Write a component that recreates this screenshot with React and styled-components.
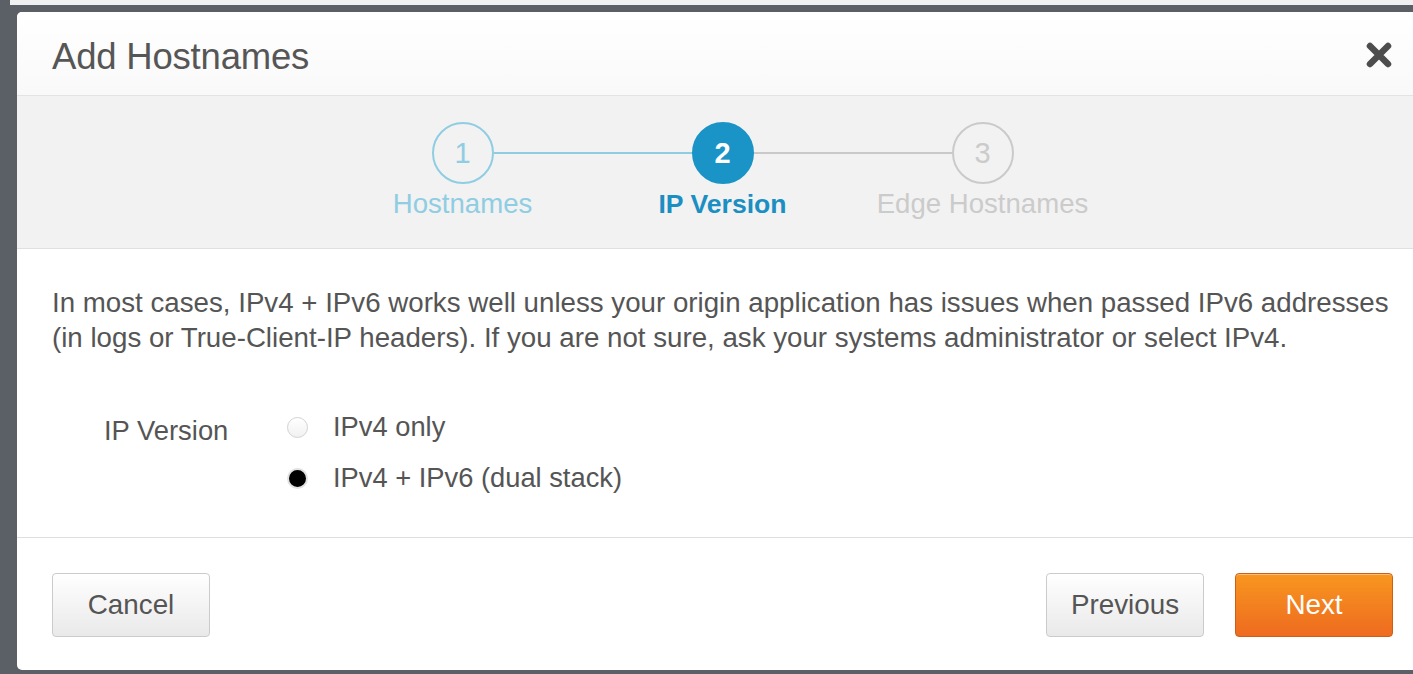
import React from 'react';
import styled, { createGlobalStyle } from 'styled-components';

const GlobalStyle = createGlobalStyle`
    html, body {
        margin: 0;
        padding: 0;
        background: #5b6067;
    }

    body {
        font-family: "Liberation Sans", Arial, Helvetica, sans-serif;
        overflow: hidden;
    }
`;

const steps = [
    { number: 1, label: 'Hostnames', state: 'done' },
    { number: 2, label: 'IP Version', state: 'active' },
    { number: 3, label: 'Edge Hostnames', state: 'todo' },
];

const stepColors = {
    done: { ring: '#8fcde2', text: '#8fcde2', fill: '#f2f2f2' },
    active: { ring: '#1a94c6', text: '#1b8fc2', fill: '#1a94c6' },
    todo: { ring: '#cacaca', text: '#cbcbcb', fill: '#f2f2f2' },
};

const CloseIcon = () => (
    <svg width="28" height="28" viewBox="0 0 28 28">
        <path
            d="M5 5 L23 23 M23 5 L5 23"
            stroke="#4d4d4d"
            strokeWidth="6.5"
            strokeLinecap="round"
            fill="none"
        />
    </svg>
);

const Stepper = () => (
    <StepBand>
        {steps.map((step, i) => (
            <Step key={step.number}>
                <StepTrack>
                    <Connector
                        $hidden={i === 0}
                        $color={steps[i - 1] && steps[i - 1].state === 'done' ? '#8fcde2' : '#c9c9c9'}
                    />
                    <StepCircle $state={step.state}>{step.number}</StepCircle>
                    <Connector
                        $hidden={i === steps.length - 1}
                        $color={step.state === 'done' ? '#8fcde2' : '#c9c9c9'}
                    />
                </StepTrack>
                <StepLabel $state={step.state}>{step.label}</StepLabel>
            </Step>
        ))}
    </StepBand>
);

export default function App() {
    return (
        <>
            <GlobalStyle />
            <Screen>
                <PageEdge />
                <Modal>
                    <Header>
                        <Title>Add Hostnames</Title>
                        <CloseButton aria-label="Close">
                            <CloseIcon />
                        </CloseButton>
                    </Header>

                    <Stepper />

                    <Body>
                        <Intro>
                            In most cases, IPv4 + IPv6 works well unless your origin application has issues when passed IPv6 addresses
                            (in logs or True-Client-IP headers). If you are not sure, ask your systems administrator or select IPv4.
                        </Intro>

                        <FieldRow>
                            <FieldLabel>IP Version</FieldLabel>
                            <Options>
                                <Option>
                                    <Radio />
                                    IPv4 only
                                </Option>
                                <Option>
                                    <Radio $checked />
                                    IPv4 + IPv6 (dual stack)
                                </Option>
                            </Options>
                        </FieldRow>
                    </Body>

                    <Footer>
                        <Button>Cancel</Button>
                        <Actions>
                            <Button>Previous</Button>
                            <Button $primary>Next</Button>
                        </Actions>
                    </Footer>
                </Modal>
            </Screen>
        </>
    );
}

const Screen = styled.div`
    min-height: 674px;
    background: #5b6067;
    padding: 0 0 0 17px;
    overflow: hidden;
`;

const PageEdge = styled.div`
    height: 5px;
    margin-left: -7px;
    background: #eef0f1;
    margin-bottom: 7px;
`;

const Modal = styled.section`
    width: 1411px;
    background: #ffffff;
    border-radius: 5px;
    overflow: hidden;
    color: #555555;
`;

const Header = styled.header`
    height: 84px;
    box-sizing: border-box;
    padding: 7px 20px 0 35px;
    display: flex;
    align-items: center;
    justify-content: space-between;
    background: linear-gradient(#ffffff, #f9f9f9);
    border-bottom: 1px solid #e3e3e3;
`;

const Title = styled.h2`
    margin: 0;
    font-size: 36.5px;
    font-weight: normal;
    color: #565656;
    letter-spacing: -0.2px;
`;

const CloseButton = styled.button`
    border: none;
    background: none;
    padding: 0;
    display: flex;
    cursor: pointer;
    margin-right: 15px;
    margin-top: -5px;
`;

const StepBand = styled.div`
    height: 153px;
    box-sizing: border-box;
    padding-top: 26px;
    background: #f2f2f2;
    border-bottom: 1px solid #e0e0e0;
    display: flex;
    justify-content: center;
`;

const Step = styled.div`
    width: 260px;
    display: flex;
    flex-direction: column;
    align-items: center;
`;

const StepTrack = styled.div`
    width: 100%;
    display: flex;
    align-items: center;
`;

const Connector = styled.span`
    flex: 1;
    height: 2px;
    background: ${p => (p.$hidden ? 'transparent' : p.$color)};
`;

const StepCircle = styled.span`
    width: 62px;
    height: 62px;
    box-sizing: border-box;
    border-radius: 50%;
    border: 2px solid ${p => stepColors[p.$state].ring};
    background: ${p => stepColors[p.$state].fill};
    color: ${p => (p.$state === 'active' ? '#ffffff' : stepColors[p.$state].text)};
    font-size: 29px;
    font-weight: ${p => (p.$state === 'active' ? 'bold' : 'normal')};
    display: flex;
    align-items: center;
    justify-content: center;
`;

const StepLabel = styled.span`
    margin-top: 4px;
    font-size: ${p => (p.$state === 'active' ? '26.6px' : '27.6px')};
    line-height: 32px;
    white-space: nowrap;
    color: ${p => stepColors[p.$state].text};
    font-weight: ${p => (p.$state === 'active' ? 'bold' : 'normal')};
`;

const Body = styled.div`
    padding: 36px 35px 42px;
    border-bottom: 1px solid #dedede;
`;

const Intro = styled.p`
    margin: 0;
    font-size: 27.7px;
    line-height: 35px;
    color: #555555;
    max-width: 1345px;
`;

const FieldRow = styled.div`
    margin-top: 54px;
    display: flex;
    align-items: flex-start;
    padding-left: 52px;
`;

const FieldLabel = styled.label`
    width: 183px;
    font-size: 27.4px;
    line-height: 35px;
    padding-top: 4px;
    color: #555555;
`;

const Options = styled.div`
    display: flex;
    flex-direction: column;
    gap: 16px;
`;

const Option = styled.label`
    display: flex;
    align-items: center;
    gap: 25px;
    font-size: 27.3px;
    line-height: 35px;
    color: #555555;
`;

const Radio = styled.span`
    width: 21px;
    height: 21px;
    box-sizing: border-box;
    border-radius: 50%;
    border: ${p => (p.$checked ? '2px solid #e2e2e2' : '1px solid #d2d2d2')};
    background: ${p => (p.$checked ? '#000000' : 'linear-gradient(#ffffff, #f1f1f1)')};
    margin-top: 1px;
`;

const Footer = styled.footer`
    padding: 35px 35px 33px;
    display: flex;
    justify-content: space-between;
    align-items: center;
`;

const Actions = styled.div`
    display: flex;
    gap: 31px;
`;

const Button = styled.button`
    width: 158px;
    height: 64px;
    border-radius: 4px;
    font-family: "Liberation Sans", Arial, sans-serif;
    font-size: 27.8px;
    cursor: pointer;
    border: 1px solid ${p => (p.$primary ? '#cf5d16' : '#cbcbcb')};
    color: ${p => (p.$primary ? '#ffffff' : '#555555')};
    background: ${p =>
        p.$primary
            ? 'linear-gradient(#f8961f, #ee6b20)'
            : 'linear-gradient(#ffffff, #e9e9e9)'};
    box-shadow: inset 0 1px 0 rgba(255, 255, 255, 0.4);
`;
